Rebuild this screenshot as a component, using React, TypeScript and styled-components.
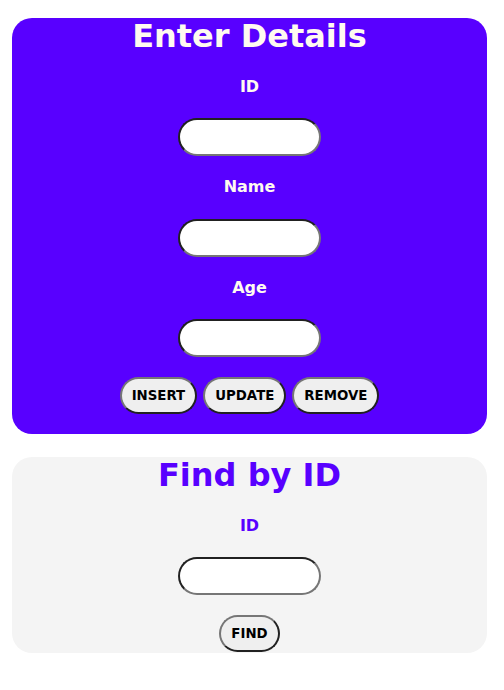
import React from "react";
import styled, { createGlobalStyle } from "styled-components";

const GlobalStyle = createGlobalStyle`
  html, body { margin: 0; padding: 0; background: #ffffff; }
  body { font-family: "DejaVu Sans", "Liberation Sans", sans-serif; }
`;

const Page = styled.div`
  display: flex;
  flex-direction: column;
  gap: 23px;
  padding: 18px 17px 0 12px;
`;

const Card = styled.section<{ $variant: "primary" | "light" }>`
  display: flex;
  flex-direction: column;
  align-items: center;
  border-radius: 20px;
  background: ${(p) => (p.$variant === "primary" ? "#5800ff" : "#f4f4f4")};
  color: ${(p) => (p.$variant === "primary" ? "#fffaf0" : "#5800ff")};
  padding-bottom: ${(p) => (p.$variant === "primary" ? "20px" : "1px")};
`;

const Title = styled.h1`
  margin: 0;
  font-size: 32px;
  font-weight: bold;
  line-height: 37.5px;
  text-align: center;
`;

const Label = styled.label`
  display: block;
  margin-top: 22px;
  font-size: 16px;
  font-weight: bold;
  line-height: 18.5px;
`;

const Input = styled.input`
  box-sizing: border-box;
  margin-top: 22px;
  width: 143px;
  height: 38px;
  border: 2px inset #767676;
  border-radius: 19px;
  background: #ffffff;
  padding: 0 12px;
  font-family: inherit;
  font-size: 13px;
  outline: none;
`;

const ButtonRow = styled.div<{ $top: number }>`
  display: flex;
  gap: 6px;
  justify-content: center;
  margin-top: ${(p) => p.$top}px;
`;

const Button = styled.button`
  box-sizing: border-box;
  height: 37px;
  padding: 0 10px;
  border: 2px outset #767676;
  border-radius: 19px;
  background: #efefef;
  color: #000000;
  font-family: "DejaVu Sans", sans-serif;
  font-size: 13.33px;
  font-weight: bold;
  line-height: 15px;
  cursor: pointer;
`;

export default function App() {
  return (
    <>
      <GlobalStyle />
      <Page>
        <Card $variant="primary">
          <Title>Enter Details</Title>
          <Label>ID</Label>
          <Input type="text" />
          <Label>Name</Label>
          <Input type="text" />
          <Label>Age</Label>
          <Input type="text" />
          <ButtonRow $top={20}>
            <Button>INSERT</Button>
            <Button>UPDATE</Button>
            <Button>REMOVE</Button>
          </ButtonRow>
        </Card>
        <Card $variant="light">
          <Title>Find by ID</Title>
          <Label>ID</Label>
          <Input type="text" />
          <ButtonRow $top={20}>
            <Button>FIND</Button>
          </ButtonRow>
        </Card>
      </Page>
    </>
  );
}
